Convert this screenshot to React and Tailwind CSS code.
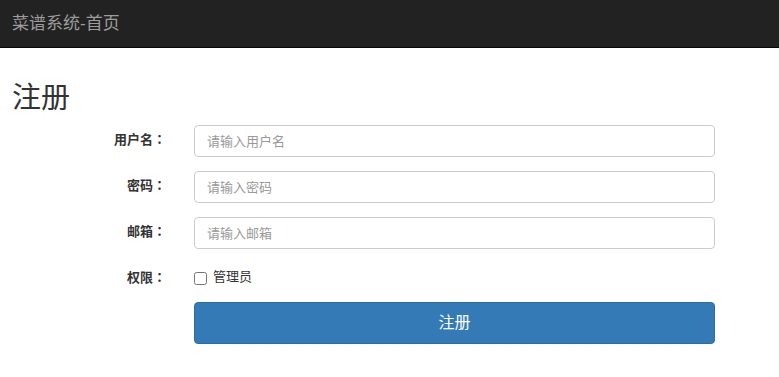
const font = { fontFamily: '"Helvetica Neue", "Liberation Sans", "Noto Sans CJK SC", sans-serif' };
const colonFont = { fontFamily: '"Noto Sans CJK TC", sans-serif' };

const Label = ({ children, lift }) => (
  <label className={`w-[155px] text-right text-[13px] font-bold text-[#333] pr-[1px] ${lift ? 'pb-[4px]' : ''}`}>
    {children}
    <span style={colonFont}>：</span>
  </label>
);

const Field = ({ label, placeholder, type = 'text' }) => (
  <div className="flex items-center h-[32px] mb-[14px]">
    <Label lift>{label}</Label>
    <input
      type={type}
      placeholder={placeholder}
      className="ml-[27px] w-[521px] h-[32px] rounded-[4px] border border-[#ccc] px-[12px] text-[13px] text-[#555] placeholder:text-[#999] outline-none"
    />
  </div>
);

export default function App() {
  return (
    <div className="min-h-screen bg-white text-[#333]" style={font}>
      {/* Navbar */}
      <nav className="h-[48px] bg-[#222] border-b border-[#080808] flex items-center px-[12px]">
        <span className="text-[17px] text-[#9d9d9d]">菜谱系统-首页</span>
      </nav>

      <div className="px-[12px]">
        <h2 className="text-[29px] leading-[33px] mt-[34px] mb-[10px] font-normal">注册</h2>

        <form>
          <Field label="用户名" placeholder="请输入用户名" />
          <Field label="密码" placeholder="请输入密码" type="password" />
          <Field label="邮箱" placeholder="请输入邮箱" />

          {/* Permission */}
          <div className="flex items-center h-[20px] mt-[18px]">
            <Label>权限</Label>
            <label className="ml-[27px] flex items-center text-[13px]">
              <input type="checkbox" className="w-[13px] h-[13px] m-0 mt-[3px]" />
              <span className="ml-[6px]">管理员</span>
            </label>
          </div>

          <div className="flex mt-[15px]">
            <button
              type="button"
              className="ml-[182px] w-[521px] h-[42px] rounded-[4px] bg-[#337ab7] border border-[#2e6da4] text-white text-[16px]"
            >
              注册
            </button>
          </div>
        </form>
      </div>
    </div>
  );
}
